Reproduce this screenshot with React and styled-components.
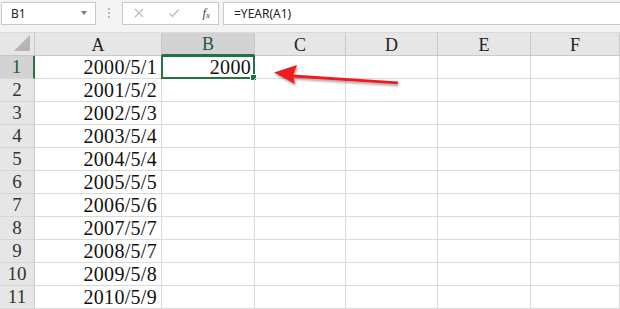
import React from "react";
import styled, { createGlobalStyle } from "styled-components";

const GlobalStyle = createGlobalStyle`
  html, body { margin: 0; padding: 0; background: #ffffff; overflow: hidden; }
  body { font-family: "Noto Sans", "Liberation Sans", sans-serif; }
`;

const cols = ["A", "B", "C", "D", "E", "F"];
const dates = [
  "2000/5/1",
  "2001/5/2",
  "2002/5/3",
  "2003/5/4",
  "2004/5/4",
  "2005/5/5",
  "2006/5/6",
  "2007/5/7",
  "2008/5/7",
  "2009/5/8",
  "2010/5/9",
];

const App = () => {
  return (
    <Page>
      <GlobalStyle />
      <FormulaBar>
        <NameBox>
          <span>B1</span>
          <Caret />
        </NameBox>
        <Grip>
          <i />
          <i />
          <i />
        </Grip>
        <ButtonsBox>
          <ToolIcon viewBox="0 0 12 12">
            <path d="M2 2 L10 10 M10 2 L2 10" stroke="#bdbdbd" strokeWidth="1.3" fill="none" />
          </ToolIcon>
          <ToolIcon viewBox="0 0 12 12">
            <path d="M1.5 6.5 L4.5 9.5 L10.5 2.5" stroke="#bdbdbd" strokeWidth="1.4" fill="none" />
          </ToolIcon>
          <Fx>
            f<sub>x</sub>
          </Fx>
        </ButtonsBox>
        <FormulaInput>=YEAR(A1)</FormulaInput>
      </FormulaBar>

      <Sheet>
        <Corner />
        {cols.map((c) => (
          <ColHead key={c} active={c === "B"}>
            {c}
          </ColHead>
        ))}
        {dates.map((d, i) => (
          <React.Fragment key={d + i}>
            <RowHead active={i === 0}>{i + 1}</RowHead>
            <Cell>{d}</Cell>
            <Cell selected={i === 0}>
              {i === 0 && "2000"}
              {i === 0 && <Handle />}
            </Cell>
            <Cell />
            <Cell />
            <Cell />
            <Cell />
          </React.Fragment>
        ))}
      </Sheet>

      <Arrow viewBox="0 0 140 30">
        <defs>
          <filter id="sh" x="-10%" y="-50%" width="120%" height="200%">
            <feDropShadow dx="1" dy="2" stdDeviation="1.2" floodColor="#000" floodOpacity="0.35" />
          </filter>
        </defs>
        <g filter="url(#sh)">
          <path d="M20 12.6 L125 19.6 L124.8 22.2 L19.8 15.6 Z" fill="#ee1c1c" />
          <path d="M1 10.5 L24 3 L20 13.5 L22 22 Z" fill="#ee1c1c" />
        </g>
      </Arrow>
    </Page>
  );
};

const Page = styled.div`
  position: relative;
  width: 620px;
  height: 309px;
  overflow: hidden;
  background: #ffffff;
`;

const FormulaBar = styled.div`
  display: flex;
  align-items: center;
  height: 33px;
  padding: 0 0 0 1px;
  box-sizing: border-box;
  background: #f3f3f3;
  border-bottom: 1px solid #dadada;
`;

const Box = styled.div`
  height: 23px;
  box-sizing: border-box;
  background: #ffffff;
  border: 1px solid #c9c9c9;
  display: flex;
  align-items: center;
  margin-top: -6px;
`;

const NameBox = styled(Box)`
  width: 95px;
  padding: 0 8px 0 9px;
  justify-content: space-between;
  font-size: 12px;
  color: #222;
`;

const Caret = styled.span`
  width: 0;
  height: 0;
  border-left: 3px solid transparent;
  border-right: 3px solid transparent;
  border-top: 4px solid #777;
`;

const Grip = styled.div`
  width: 26px;
  display: flex;
  flex-direction: column;
  align-items: center;
  gap: 2px;
  margin-top: -6px;
  i {
    width: 2px;
    height: 2px;
    background: #b8b8b8;
  }
`;

const ButtonsBox = styled(Box)`
  width: 97px;
  padding: 0 8px 0 10px;
  justify-content: space-between;
`;

const ToolIcon = styled.svg`
  width: 12px;
  height: 12px;
`;

const Fx = styled.span`
  font-family: "Liberation Serif", serif;
  font-style: italic;
  font-size: 13px;
  color: #444;
  sub {
    font-size: 9px;
    vertical-align: -1px;
  }
`;

const FormulaInput = styled(Box)`
  flex: 1;
  margin-left: 4px;
  border-right: none;
  padding-left: 10px;
  font-size: 12px;
  color: #222;
`;

const Sheet = styled.div`
  display: grid;
  grid-template-columns: 35px 127px 93px 91px 92px 93px 1fr;
  grid-auto-rows: 23px;
  font-family: "Liberation Serif", "DejaVu Serif", serif;
`;

const HeadBase = styled.div`
  box-sizing: border-box;
  display: flex;
  align-items: center;
  justify-content: center;
  border-right: 1px solid #c9c9c9;
  border-bottom: 1px solid #c9c9c9;
  font-size: 18px;
`;

const Corner = styled(HeadBase)`
  position: relative;
  background: #e6e6e6;
  &::after {
    content: "";
    position: absolute;
    right: 4px;
    bottom: 4px;
    width: 0;
    height: 0;
    border-left: 16px solid transparent;
    border-bottom: 16px solid #b5b5b5;
  }
`;

const ColHead = styled(HeadBase)`
  background: ${(p) => (p.active ? "#d3d3d3" : "#e6e6e6")};
  color: ${(p) => (p.active ? "#1e5c3a" : "#222")};
  border-bottom: ${(p) => (p.active ? "2px solid #217346" : "1px solid #c9c9c9")};
  padding-top: 2px;
`;

const RowHead = styled(HeadBase)`
  background: ${(p) => (p.active ? "#d3d3d3" : "#e6e6e6")};
  color: ${(p) => (p.active ? "#1e5c3a" : "#333")};
  border-right: ${(p) => (p.active ? "2px solid #217346" : "1px solid #c9c9c9")};
  border-bottom-color: #d6d6d6;
  font-size: 19px;
`;

const Cell = styled.div`
  position: relative;
  box-sizing: border-box;
  display: flex;
  align-items: center;
  justify-content: flex-end;
  padding-right: 4px;
  border-right: 1px solid #d9d9d9;
  border-bottom: 1px solid #d9d9d9;
  font-size: 20px;
  letter-spacing: 0.3px;
  color: #111;
  ${(p) =>
    p.selected &&
    `
    border: 2px solid #217346;
    margin: -1px 0 0 -1px;
    padding-right: 2px;
  `}
`;

const Handle = styled.span`
  position: absolute;
  right: -4px;
  bottom: -4px;
  width: 5px;
  height: 5px;
  background: #217346;
  border: 1px solid #ffffff;
`;

const Arrow = styled.svg`
  position: absolute;
  left: 273px;
  top: 62px;
  width: 140px;
  height: 30px;
  overflow: visible;
`;

export default App;
